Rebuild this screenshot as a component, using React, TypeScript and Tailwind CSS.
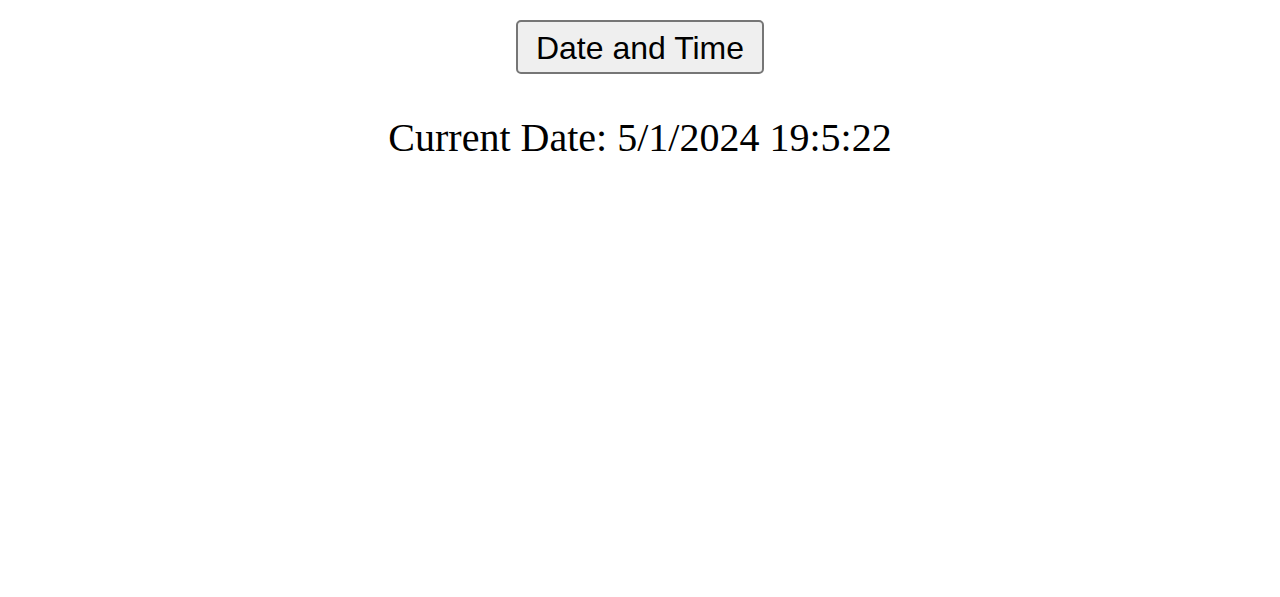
export default function App() {
  const now = "5/1/2024 19:5:22";

  return (
    <div className="min-h-[597px] bg-white flex flex-col items-center pt-[20px] text-black">
      <button
        type="button"
        className="bg-[#efefef] border-2 border-[#767676] rounded-[5px] px-[18px] pt-[8px] pb-[6px] text-[32px] leading-[36px] font-['Liberation_Sans',Arial,sans-serif]"
      >
        Date and Time
      </button>
      <p className="mt-[41px] text-[40px] leading-[46px] font-['Liberation_Serif','Times_New_Roman',serif]">
        Current Date: {now}
      </p>
    </div>
  );
}
